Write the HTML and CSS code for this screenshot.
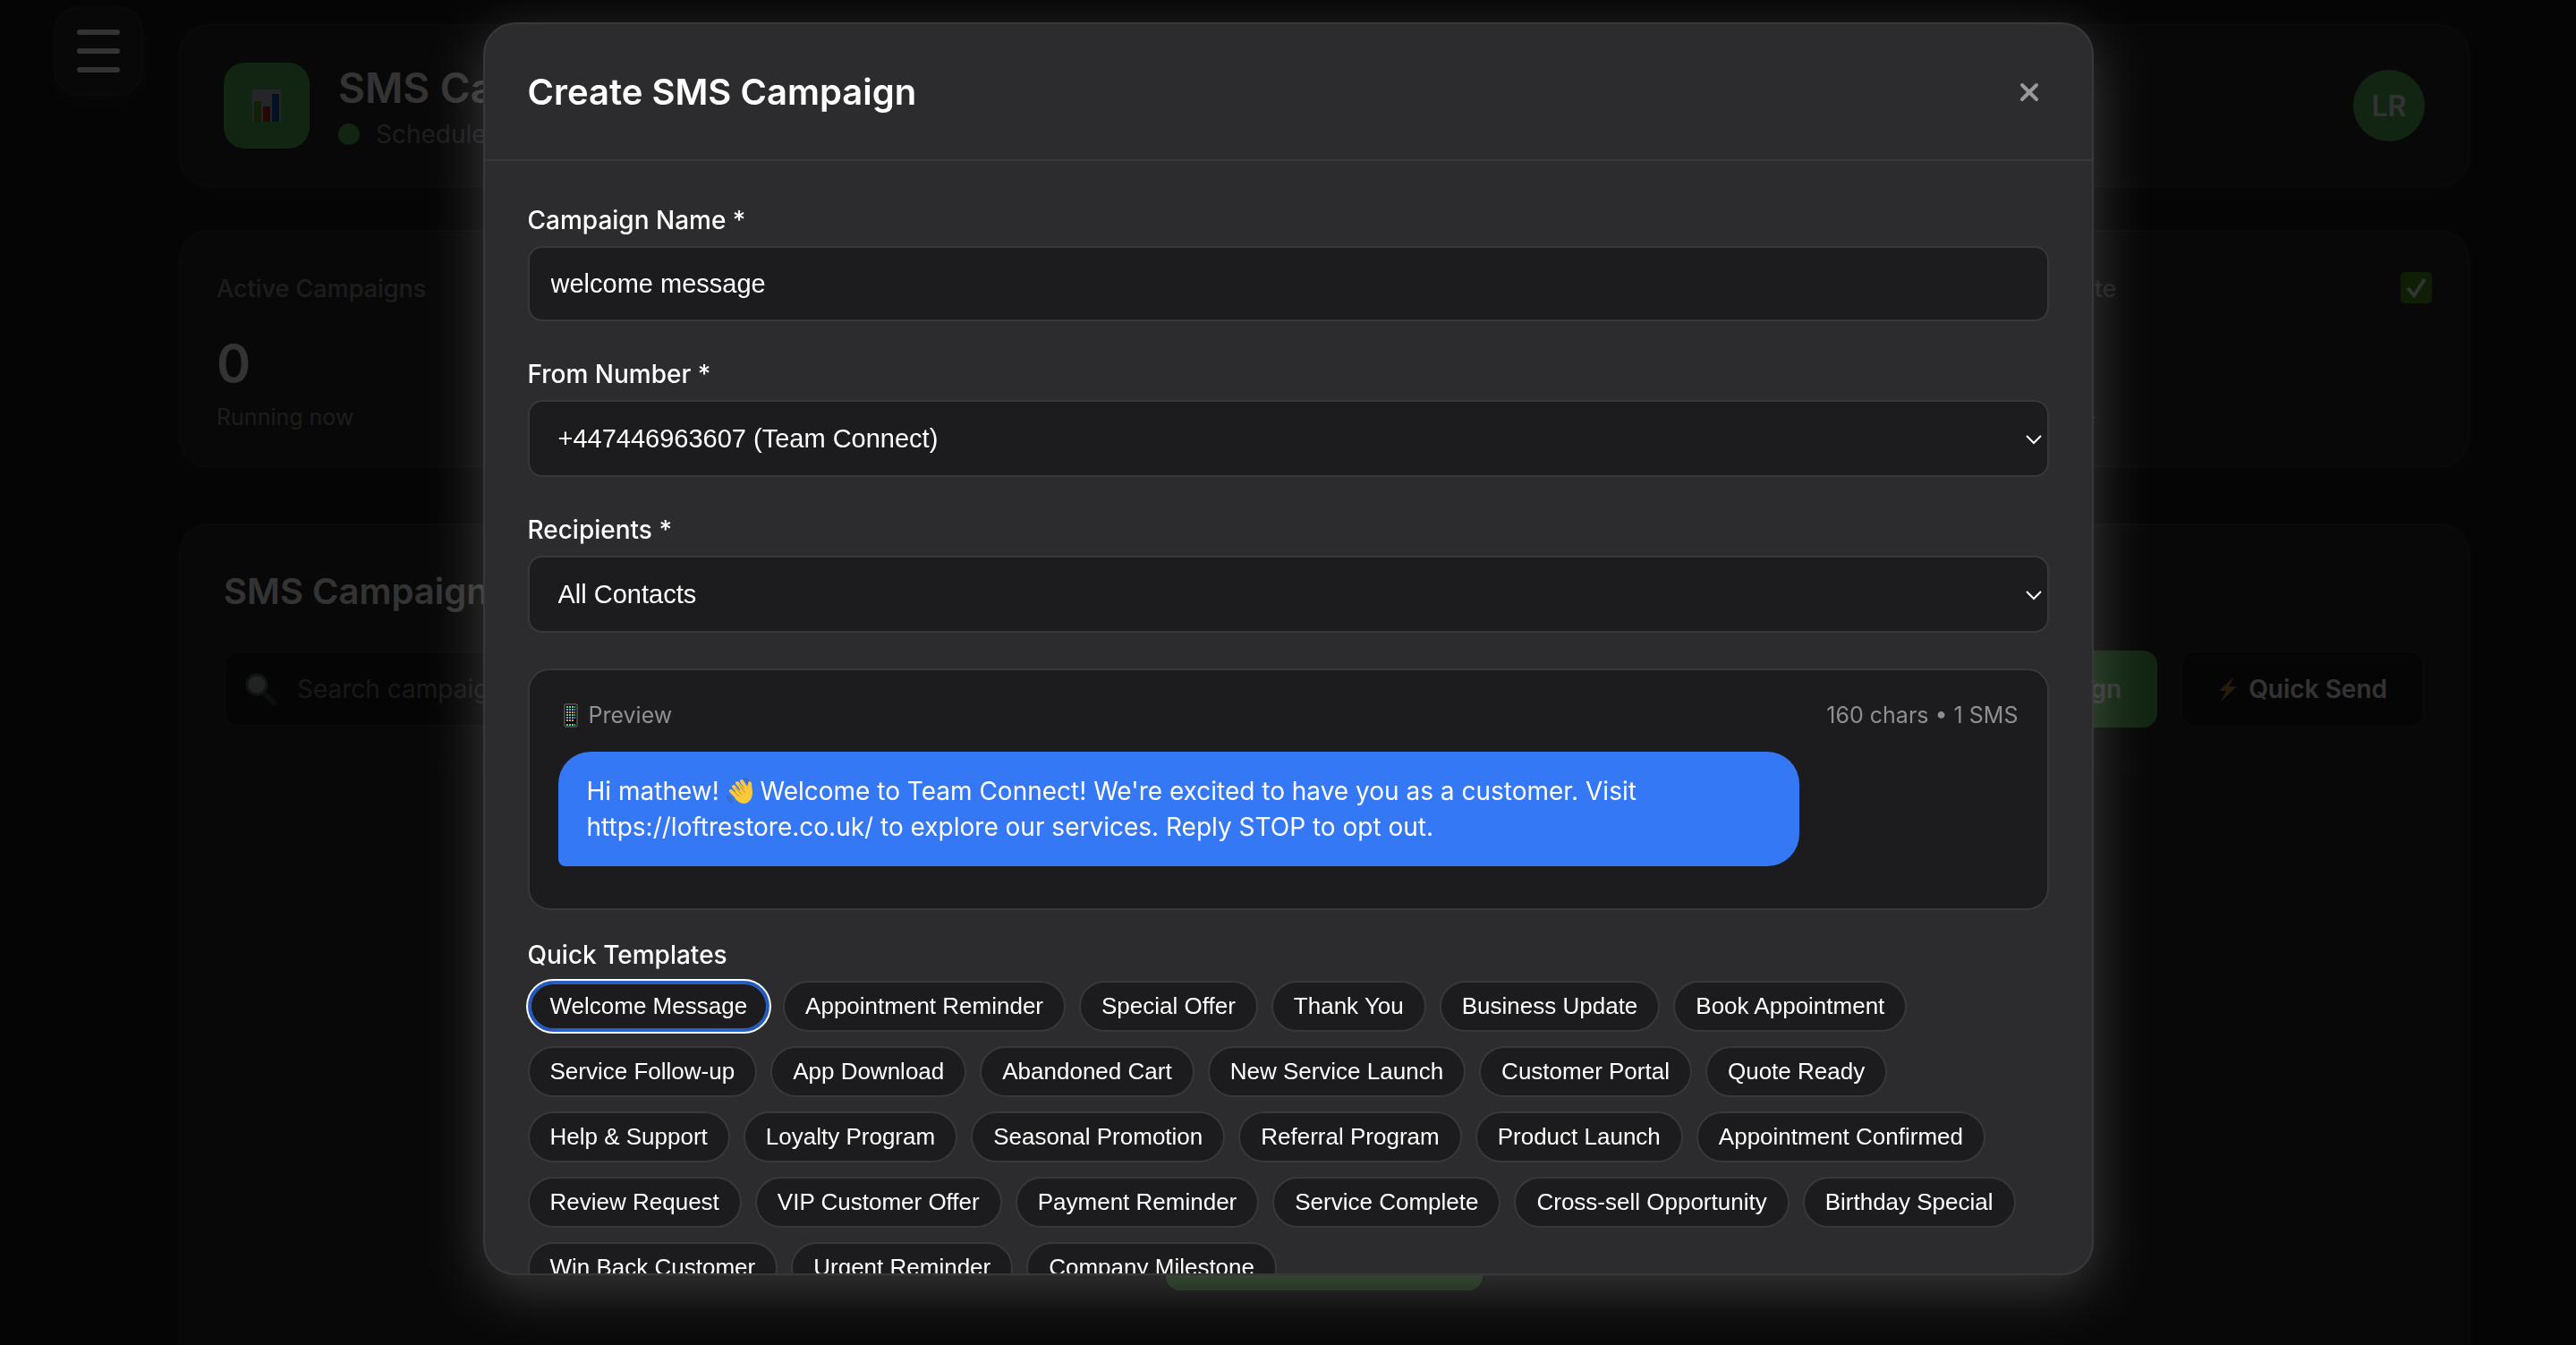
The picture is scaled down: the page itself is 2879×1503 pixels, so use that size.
FILE: index.html
```html
<!DOCTYPE html>
<html lang="en">
<head>
    <meta charset="UTF-8">
    <meta name="viewport" content="width=device-width, initial-scale=1.0">
    <title>SMS Campaigns</title>
    <link rel="stylesheet" href="styles.css">
</head>
<body>
    <button class="menu-btn" aria-label="Open menu"><span></span><span></span><span></span></button>

    <div class="container">
        <header class="card header">
            <div class="logo">
                <svg width="32" height="36" viewBox="0 0 32 36">
                    <rect width="32" height="36" fill="#b9bfca"/>
                    <rect x="2" y="13" width="8" height="23" fill="#5aa02c"/>
                    <rect x="12" y="19" width="8" height="17" fill="#c0281c"/>
                    <rect x="22" y="5" width="8" height="31" fill="#1f4fb0"/>
                </svg>
            </div>
            <div class="header-text">
                <h1>SMS Campaigns</h1>
                <p><span class="dot"></span>Scheduled messages</p>
            </div>
            <div class="avatar">LR</div>
        </header>

        <div class="stats">
            <div class="card stat">
                <div class="stat-top">Active Campaigns</div>
                <div class="stat-value">0</div>
                <div class="stat-sub">Running now</div>
            </div>
            <div class="card stat"></div>
            <div class="card stat"></div>
            <div class="card stat">
                <div class="stat-top">Success rate
                    <svg width="35" height="35" viewBox="0 0 35 35">
                        <rect width="35" height="35" rx="5" fill="#4a9a1e"/>
                        <path d="M8 18l7 8 12-18" fill="none" stroke="#fff" stroke-width="4"/>
                    </svg>
                </div>
                <div class="stat-value"></div>
                <div class="stat-sub">Average rate</div>
            </div>
        </div>

        <main class="card campaigns">
            <h2>SMS Campaigns</h2>
            <div class="toolbar">
                <label class="search">
                    <svg width="36" height="36" viewBox="0 0 36 36">
                        <path d="M21 22l12 12" stroke="#3c4043" stroke-width="6" stroke-linecap="round"/>
                        <circle cx="13" cy="13" r="11" fill="#a3a9ac" stroke="#5d6366" stroke-width="3"/>
                    </svg>
                    <input type="text" placeholder="Search campaigns..." aria-label="Search campaigns">
                </label>
                <button class="btn btn-primary">Create Campaign</button>
                <button class="btn btn-dark">
                    <svg width="22" height="28" viewBox="0 0 22 28"><path d="M18 0L1 16h8L3 28 21 11h-9z" fill="#c08a35"/></svg>
                    Quick Send
                </button>
            </div>
            <div class="empty">
                <button class="btn btn-primary">New SMS Campaign</button>
            </div>
        </main>
    </div>

    <div class="overlay">
        <div class="modal" role="dialog" aria-labelledby="modal-title">
            <div class="modal-header">
                <h2 id="modal-title">Create SMS Campaign</h2>
                <button class="close" aria-label="Close">
                    <svg width="22" height="22" viewBox="0 0 22 22"><path d="M3 3l16 16M19 3L3 19" stroke="#98989d" stroke-width="4" stroke-linecap="round"/></svg>
                </button>
            </div>
            <div class="modal-body">
                <div class="form-group">
                    <label for="name">Campaign Name *</label>
                    <input type="text" id="name" value="welcome message">
                </div>
                <div class="form-group">
                    <label for="from">From Number *</label>
                    <div class="select">
                        <select id="from"><option>+447446963607 (Team Connect)</option></select>
                        <svg width="18" height="12" viewBox="0 0 18 12"><path d="M1 2l8 8 8-8" fill="none" stroke="#fff" stroke-width="2"/></svg>
                    </div>
                </div>
                <div class="form-group">
                    <label for="recipients">Recipients *</label>
                    <div class="select">
                        <select id="recipients"><option>All Contacts</option></select>
                        <svg width="18" height="12" viewBox="0 0 18 12"><path d="M1 2l8 8 8-8" fill="none" stroke="#fff" stroke-width="2"/></svg>
                    </div>
                </div>

                <div class="preview">
                    <div class="preview-header">
                        <span class="preview-title">
                            <svg width="16" height="27" viewBox="0 0 16 27">
                                <rect x="1" y="1" width="14" height="25" rx="1" fill="#0b0b0c" stroke="#77777b"/>
                                <path d="M3 4h10M3 13h10M3 24h10" stroke="#6fcf97" stroke-width="2" stroke-dasharray="2 1"/>
                                <path d="M3 7h10M3 16h10" stroke="#5ab0e8" stroke-width="2" stroke-dasharray="2 1"/>
                                <path d="M3 10h10M3 19h8" stroke="#e0a070" stroke-width="2" stroke-dasharray="2 1"/>
                            </svg>
                            Preview
                        </span>
                        <span>160 chars • 1 SMS</span>
                    </div>
                    <div class="bubble">
                        Hi mathew!
                        <svg class="wave" width="30" height="30" viewBox="0 0 30 30">
                            <path d="M8 10l8 9M12 6l8 10M17 4l7 11M5 15l9 9" stroke="#fcc93c" stroke-width="4" stroke-linecap="round"/>
                            <path d="M8 16l15-5 1-5c1-3 4-2 4 1l1 9c0 7-3 12-9 13-4 0-7-2-10-5z" fill="#fcc93c"/>
                            <path d="M10 11l7 8M14 8l7 9M8 15l6 6" stroke="#c98a1b" stroke-width="1"/>
                            <path d="M18 1c3 1 5 3 6 6M20 0c2 1 4 2 5 4M1 20c0 4 2 6 5 8M4 21c0 2 1 3 3 5" fill="none" stroke="#4a5a78" stroke-width="1"/>
                        </svg>
                        Welcome to Team Connect! We're excited to have you as a customer. Visit https://loftrestore.co.uk/ to explore our services. Reply STOP to opt out.
                    </div>
                </div>

                <div class="form-group">
                    <div class="group-title">Quick Templates</div>
                    <div class="templates">
                        <button class="template active">Welcome Message</button>
                        <button class="template">Appointment Reminder</button>
                        <button class="template">Special Offer</button>
                        <button class="template">Thank You</button>
                        <button class="template">Business Update</button>
                        <button class="template">Book Appointment</button>
                        <button class="template">Service Follow-up</button>
                        <button class="template">App Download</button>
                        <button class="template">Abandoned Cart</button>
                        <button class="template">New Service Launch</button>
                        <button class="template">Customer Portal</button>
                        <button class="template">Quote Ready</button>
                        <button class="template">Help &amp; Support</button>
                        <button class="template">Loyalty Program</button>
                        <button class="template">Seasonal Promotion</button>
                        <button class="template">Referral Program</button>
                        <button class="template">Product Launch</button>
                        <button class="template">Appointment Confirmed</button>
                        <button class="template">Review Request</button>
                        <button class="template">VIP Customer Offer</button>
                        <button class="template">Payment Reminder</button>
                        <button class="template">Service Complete</button>
                        <button class="template">Cross-sell Opportunity</button>
                        <button class="template">Birthday Special</button>
                        <button class="template">Win Back Customer</button>
                        <button class="template">Urgent Reminder</button>
                        <button class="template">Company Milestone</button>
                    </div>
                </div>
            </div>
        </div>
    </div>
</body>
</html>
```
FILE: styles.css
```css
* { margin: 0; padding: 0; box-sizing: border-box; }
body { font-family: Inter, "Liberation Sans", sans-serif; background: #1c1c1e; color: #fff; font-size: 28px; height: 100vh; overflow: hidden; }
button { font-family: inherit; color: inherit; border: none; cursor: pointer; }
svg { flex-shrink: 0; }

/* Page */
.container { height: 100vh; overflow: hidden; padding: 27px 119px 0 200px; }
.card { background: #2c2c2e; border: 2px solid #363638; border-radius: 34px; box-shadow: 0 2px 8px rgba(255,255,255,0.06); }
.menu-btn { position: fixed; top: 7px; left: 60px; width: 100px; height: 100px; display: flex; flex-direction: column; align-items: center; justify-content: center; gap: 15px; background: #2c2c2e; border: 2px solid #363638; border-radius: 28px; box-shadow: 0 8px 24px rgba(255,255,255,0.06); }
.menu-btn span { width: 48px; height: 6px; border-radius: 3px; background: #fff; }

.header { display: flex; align-items: center; gap: 32px; padding: 41px 48px; }
.logo { width: 96px; height: 96px; display: flex; align-items: center; justify-content: center; background: #5cb85c; border-radius: 24px; }
.header-text { flex: 1; }
.header h1 { font-size: 46px; font-weight: 600; line-height: 56px; }
.header p { display: flex; align-items: center; gap: 18px; margin-top: 8px; line-height: 32px; color: #8e8e93; }
.dot { width: 24px; height: 24px; border-radius: 50%; background: #5cb85c; }
.avatar { width: 80px; height: 80px; display: flex; align-items: center; justify-content: center; background: #5cb85c; border-radius: 50%; font-size: 32px; font-weight: 600; }

.stats { display: grid; grid-template-columns: repeat(4, 1fr); gap: 48px; margin: 48px 0 63px; }
.stat { padding: 45px 40px 37px; }
.stat-top { display: flex; justify-content: space-between; line-height: 38px; font-size: 27px; font-weight: 500; color: #8e8e93; }
.stat-value { height: 72px; margin: 28px 0 7px; line-height: 72px; font-size: 58px; font-weight: 600; }
.stat-sub { line-height: 34px; font-size: 25px; color: #8e8e93; }
.stat:last-child .stat-sub { font-size: 24px; }

.campaigns { padding: 49px 48px 300px; }
.campaigns h2 { font-size: 40px; font-weight: 600; line-height: 50px; margin-bottom: 41px; }
.toolbar { display: flex; align-items: center; gap: 26px; padding-bottom: 42px; border-bottom: 2px solid #333335; }
.search { width: 800px; height: 84px; display: flex; align-items: center; gap: 22px; margin-right: auto; padding: 0 22px; background: #1c1c1e; border: 2px solid #333335; border-radius: 16px; }
.search input { flex: 1; background: none; border: none; font-family: inherit; font-size: 28px; color: #fff; }
.search input::placeholder { color: #8e8e93; opacity: 0.8; }
.btn { height: 86px; display: flex; align-items: center; gap: 12px; padding: 0 40px; border-radius: 16px; font-size: 28px; font-weight: 600; }
.btn-primary { background: #5cb85c; }
.btn-dark { background: #1c1c1e; border: 2px solid #333335; }
.empty { display: flex; align-items: flex-end; justify-content: center; height: 585px; }

/* Modal */
.overlay { position: fixed; inset: 0; display: flex; justify-content: center; padding: 25px 0 78px; background: rgba(0,0,0,0.8); }
.modal { width: 90%; max-width: 1800px; height: 100%; display: flex; flex-direction: column; background: #2c2c2e; border: 2px solid #38383a; border-radius: 36px; box-shadow: 0 16px 64px rgba(255,255,255,0.2); overflow: hidden; }
.modal-header { display: flex; align-items: center; justify-content: space-between; height: 153px; flex-shrink: 0; padding: 0 48px; border-bottom: 2px solid #38383a; }
.modal-header h2 { font-size: 40px; font-weight: 600; }
.close { width: 44px; height: 44px; display: flex; align-items: center; justify-content: center; background: none; }
.modal-body { flex: 1; min-height: 0; overflow: hidden; padding: 47px 48px; }
.form-group { margin-bottom: 40px; }
.form-group label, .group-title { display: block; margin-bottom: 10px; line-height: 38px; font-size: 28px; font-weight: 500; }
.form-group input, .form-group select { display: block; width: 100%; height: 84px; padding: 0 24px; appearance: none; background: #1c1c1e; border: 2px solid #38383a; border-radius: 16px; font-family: "Liberation Sans", Arial, sans-serif; font-size: 29px; color: #fff; }
.form-group select { height: 86px; padding: 0 32px; }
.select { position: relative; }
.select svg { position: absolute; right: 8px; top: 38px; pointer-events: none; }

.preview { margin-bottom: 31px; padding: 33px 32px 32px; background: #1c1c1e; border: 2px solid #38383a; border-radius: 24px; }
.preview-header { display: flex; justify-content: space-between; margin-bottom: 24px; line-height: 34px; font-size: 25px; color: #8e8e93; }
.preview-title { display: flex; align-items: center; gap: 12px; padding-left: 6px; }
.bubble { width: 85%; margin-bottom: 15px; padding: 24px 32px; background: #3478f6; border-radius: 36px 36px 36px 8px; line-height: 40px; font-size: 28px; }
.wave { vertical-align: -5px; }

.templates { display: flex; flex-wrap: wrap; gap: 16px 15px; }
.template { height: 57px; padding: 0 23px; background: #1c1c1e; border: 2px solid #38383a; border-radius: 30px; font-family: "Liberation Sans", Arial, sans-serif; font-size: 26px; color: #fff; }
.template.active { border-color: #2860c8; box-shadow: 0 0 0 2px #fff, inset 0 0 0 2px #2860c8; }
```
